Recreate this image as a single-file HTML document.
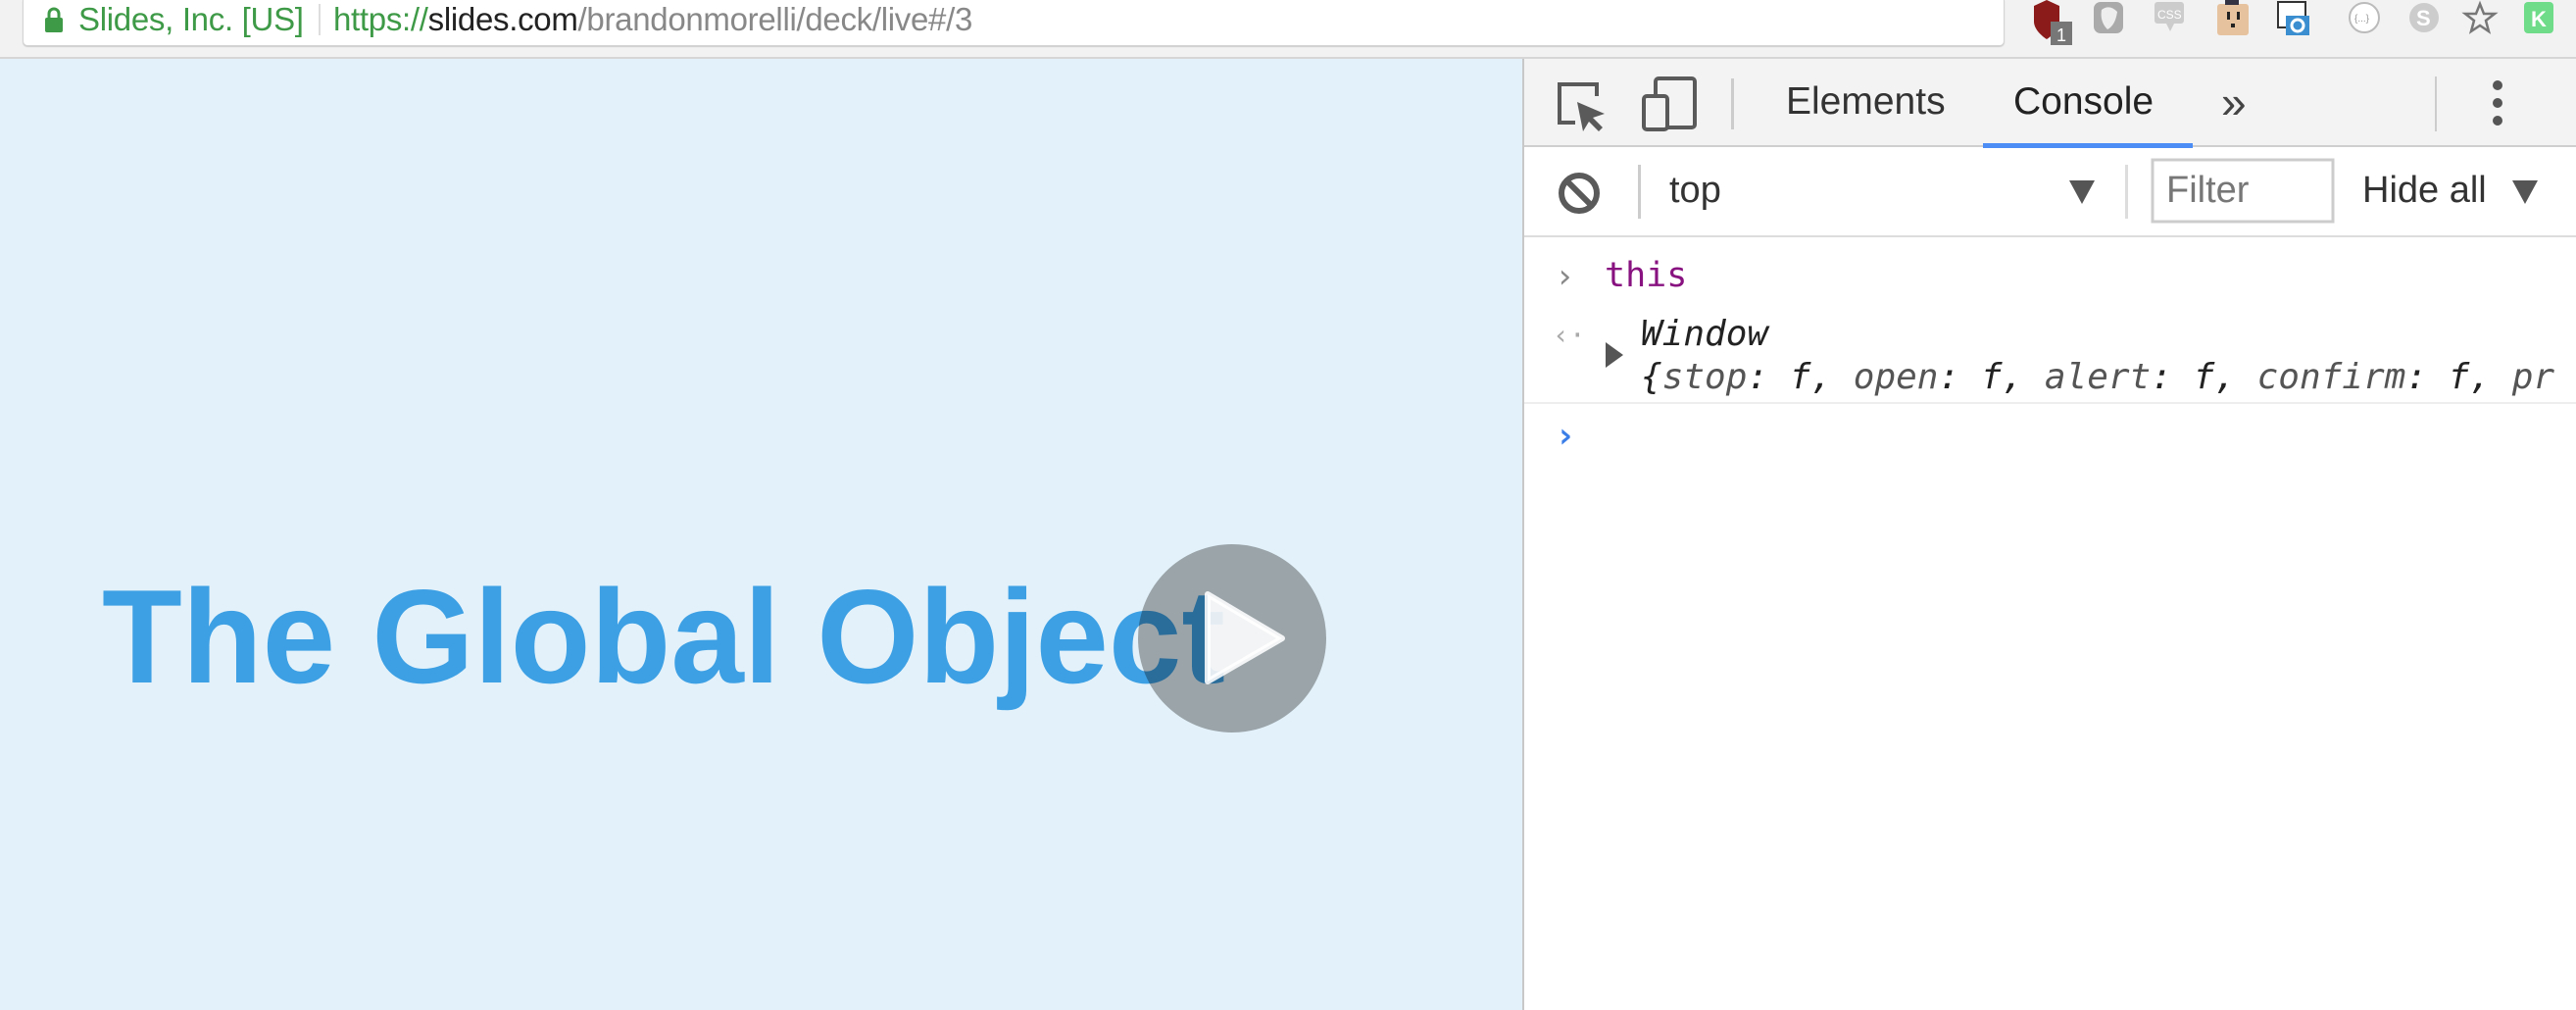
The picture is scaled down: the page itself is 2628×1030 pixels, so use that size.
<!DOCTYPE html>
<html><head><meta charset="utf-8"><style>
*{margin:0;padding:0;box-sizing:border-box}
body{width:2628px;height:1030px;overflow:hidden;position:relative;background:#fff;font-family:"Liberation Sans",sans-serif}
.abs{position:absolute}
.mono{font-family:"DejaVu Sans Mono","Liberation Mono",monospace}
</style></head><body>
<!-- top chrome -->
<div class="abs" style="left:0;top:0;width:2628px;height:60px;background:#f2f2f2;border-bottom:2px solid #d6d6d6"></div>
<div class="abs" style="left:23px;top:-4px;width:2022px;height:51px;background:#fff;border:1px solid #d4d4d4;border-radius:5px;box-shadow:0 1px 1px #ccc"></div>
<svg class="abs" style="left:44px;top:6px" width="22" height="28" viewBox="0 0 22 28"><rect x="2" y="12" width="18" height="15" rx="2" fill="#3f9a48"/><path d="M6 13V8a5 5 0 0 1 10 0v5" stroke="#3f9a48" stroke-width="3" fill="none"/></svg>
<div class="abs" style="left:80px;top:1px;font-size:33px;color:#3f9a48;line-height:38px;letter-spacing:-0.3px">Slides, Inc. [US]</div>
<div class="abs" style="left:325px;top:4px;width:2px;height:32px;background:#ddd"></div>
<div class="abs" style="left:340px;top:1px;font-size:33px;line-height:38px;color:#888;letter-spacing:-0.3px"><span style="color:#3f9a48">https://</span><span style="color:#222">slides.com</span>/brandonmorelli/deck/live#/3</div>
<!-- extension icons -->
<svg class="abs" style="left:2070px;top:0" width="560" height="56" viewBox="0 0 560 56">
<path d="M5 6 L18 0 L31 6 V22 C31 32 18 40 18 40 C18 40 5 32 5 22Z" fill="#8b1a1a"/>
<rect x="22" y="22" width="22" height="24" fill="#777"/><text x="28" y="42" font-size="18" fill="#fff" font-family="Liberation Sans">1</text>
<rect x="66" y="2" width="30" height="32" rx="7" fill="#aaa"/><path d="M74 10 q8-6 16 2 q-2 14-10 18 q-8-8-6-20z" fill="#eee"/>
<rect x="128" y="2" width="30" height="22" rx="3" fill="#ccc"/><path d="M140 24 l8 0 l-4 8z" fill="#ccc"/><text x="131" y="19" font-size="12" fill="#fff">CSS</text>
<rect x="192" y="4" width="32" height="32" rx="3" fill="#e7c29e"/><rect x="200" y="0" width="14" height="5" fill="#334"/><rect x="202" y="12" width="3" height="8" fill="#222"/><rect x="212" y="12" width="3" height="8" fill="#222"/><rect x="206" y="24" width="4" height="4" fill="#222"/>
<rect x="254" y="2" width="28" height="26" fill="#fff" stroke="#333" stroke-width="2"/><rect x="262" y="16" width="24" height="20" fill="#3b8fd0"/><circle cx="274" cy="26" r="6" fill="none" stroke="#fff" stroke-width="3"/>
<circle cx="342" cy="18" r="15" fill="#fff" stroke="#bbb" stroke-width="2"/><text x="332" y="22" font-size="10" fill="#999">{...}</text>
<circle cx="403" cy="18" r="15" fill="#ccc"/><text x="395" y="26" font-size="22" fill="#fff" font-weight="bold">S</text>
<path d="M460 4 l4 10 h11 l-9 7 3 11 -9-6 -9 6 3-11 -9-7 h11z" fill="none" stroke="#777" stroke-width="2.5"/>
<rect x="505" y="2" width="30" height="32" rx="4" fill="#6fdc8a"/><text x="512" y="27" font-size="22" fill="#fff" font-weight="bold">K</text>
</svg>
<!-- slide -->
<div class="abs" style="left:0;top:60px;width:1553px;height:970px;background:#e3f2fa"></div>
<svg class="abs" style="left:0;top:60px" width="1553" height="970">
<text x="104" y="636" font-size="136" font-weight="bold" fill="#3ea0e4" font-family="Liberation Sans" textLength="1146" lengthAdjust="spacingAndGlyphs">The Global Object</text>
<circle cx="1257" cy="591" r="96" fill="rgba(0,0,0,0.32)"/>
<path d="M1232 546 L1232 635 L1308 591Z" fill="rgba(255,255,255,0.88)" stroke="rgba(255,255,255,0.88)" stroke-width="6" stroke-linejoin="round"/>
</svg>
<!-- devtools -->
<div class="abs" style="left:1553px;top:60px;width:1075px;height:970px;background:#fff;border-left:2px solid #c8c8c8"></div>
<div class="abs" style="left:1555px;top:60px;width:1073px;height:90px;background:#f3f3f3;border-bottom:2px solid #cfcfcf"></div>
<svg class="abs" style="left:1555px;top:60px" width="1073" height="180">
<path d="M52 65 H36 V26 H74 V38" fill="none" stroke="#5a5a5a" stroke-width="4"/>
<path d="M54 44 L82 56 L70 60 L80 70 L76 74 L66 64 L60 74Z" fill="#5a5a5a"/>
<rect x="134" y="20" width="40" height="50" rx="3" fill="none" stroke="#5a5a5a" stroke-width="4"/>
<rect x="122" y="38" width="24" height="34" rx="3" fill="#f3f3f3" stroke="#5a5a5a" stroke-width="4"/>
<rect x="211" y="20" width="3" height="52" fill="#ccc"/>
<rect x="468" y="86" width="214" height="5" fill="#4c8cf5"/>
<rect x="929" y="18" width="2" height="56" fill="#ccc"/>
<circle cx="993" cy="27" r="5" fill="#555"/><circle cx="993" cy="45" r="5" fill="#555"/><circle cx="993" cy="63" r="5" fill="#555"/>
<circle cx="56" cy="137" r="18" fill="none" stroke="#5a5a5a" stroke-width="6"/><path d="M44 125 L68 149" stroke="#5a5a5a" stroke-width="6"/>
<rect x="116" y="108" width="3" height="55" fill="#ccc"/>
<path d="M556 124 h26 l-13 24z" fill="#555"/>
<rect x="613" y="108" width="3" height="55" fill="#ddd"/>
<rect x="641" y="103" width="184" height="63" fill="#fff" stroke="#ccc" stroke-width="3"/>
<path d="M1008 124 h26 l-13 24z" fill="#555"/>
</svg>
<div class="abs" style="left:1822px;top:82px;font-size:39px;color:#333;line-height:44px">Elements</div>
<div class="abs" style="left:2054px;top:82px;font-size:39px;color:#222;line-height:44px">Console</div>
<div class="abs" style="left:2266px;top:80px;font-size:46px;color:#444;line-height:48px">»</div>
<div class="abs" style="left:1703px;top:172px;font-size:38px;color:#333;line-height:44px">top</div>
<div class="abs" style="left:2210px;top:172px;font-size:38px;color:#777;line-height:44px">Filter</div>
<div class="abs" style="left:2410px;top:172px;font-size:38px;color:#333;line-height:44px">Hide all</div>
<div class="abs" style="left:1555px;top:240px;width:1073px;height:2px;background:#ddd"></div>
<!-- console -->
<div class="abs mono" style="left:1586px;top:262px;font-size:34px;color:#888;line-height:40px">›</div>
<div class="abs mono" style="left:1637px;top:260px;font-size:35px;color:#881280;line-height:42px">this</div>
<div class="abs mono" style="left:1584px;top:322px;font-size:28px;color:#aaa;line-height:40px">‹·</div>
<svg class="abs" style="left:1638px;top:349px" width="20" height="26"><path d="M0 0 L18 13 L0 26Z" fill="#555"/></svg>
<div class="abs mono" style="left:1674px;top:320px;font-size:36px;color:#222;font-style:italic;line-height:42px;white-space:nowrap">Window</div>
<div class="abs mono" style="left:1674px;top:364px;font-size:36px;color:#222;font-style:italic;line-height:42px;white-space:nowrap">{<span style="color:#555">stop</span>: f, <span style="color:#555">open</span>: f, <span style="color:#555">alert</span>: f, <span style="color:#555">confirm</span>: f, <span style="color:#555">pr</span></div>
<div class="abs" style="left:1555px;top:410px;width:1073px;height:2px;background:#eee"></div>
<div class="abs mono" style="left:1586px;top:424px;font-size:36px;color:#3b7ee8;line-height:42px;font-weight:bold">›</div>
</body></html>
